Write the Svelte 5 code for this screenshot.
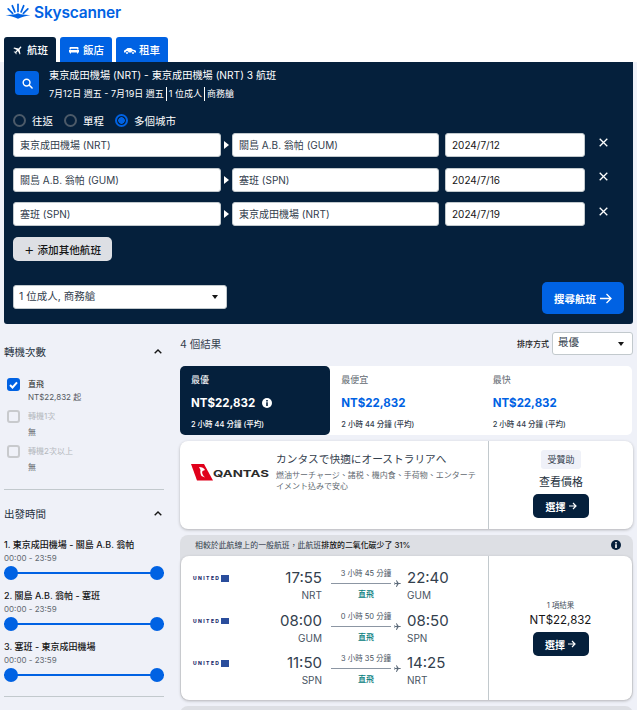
<script lang="ts">
	const tabs = [
		{ label: '航班', icon: 'plane', active: true },
		{ label: '飯店', icon: 'bed', active: false },
		{ label: '租車', icon: 'car', active: false }
	];

	const trips = [
		{ from: '東京成田機場 (NRT)', to: '關島 A.B. 翁帕 (GUM)', date: '2024/7/12' },
		{ from: '關島 A.B. 翁帕 (GUM)', to: '塞班 (SPN)', date: '2024/7/16' },
		{ from: '塞班 (SPN)', to: '東京成田機場 (NRT)', date: '2024/7/19' }
	];

	const stops = [
		{ label: '直飛', sub: 'NT$22,832 起', on: true },
		{ label: '轉機1次', sub: '無', on: false },
		{ label: '轉機2次以上', sub: '無', on: false }
	];

	const times = ['1. 東京成田機場 - 關島 A.B. 翁帕', '2. 關島 A.B. 翁帕 - 塞班', '3. 塞班 - 東京成田機場'];

	const sorts = [
		{ label: '最優', price: 'NT$22,832', active: true },
		{ label: '最便宜', price: 'NT$22,832', active: false },
		{ label: '最快', price: 'NT$22,832', active: false }
	];

	const legs = [
		{ dep: '17:55', from: 'NRT', dur: '3 小時 45 分鐘', arr: '22:40', to: 'GUM' },
		{ dep: '08:00', from: 'GUM', dur: '0 小時 50 分鐘', arr: '08:50', to: 'SPN' },
		{ dep: '11:50', from: 'SPN', dur: '3 小時 35 分鐘', arr: '14:25', to: 'NRT' }
	];

	const planePath =
		'M21 12c0-.8-.7-1.4-1.5-1.4H15L10 3H8l2.4 7.6H6L4.4 8.6H3l1 3.4-1 3.4h1.4L6 13.4h4.4L8 21h2l5-7.6h4.5c.8 0 1.500-.6 1.500-1.400z';
</script>

<div class="page">
	<header class="logo">
		<svg width="28" height="17" viewBox="0 0 30 19" fill="none" stroke="#0062e3" stroke-linecap="round">
			<g stroke-width="1.9">
				<path d="M15 9.5V1.500" />
				<path d="M11.500 10L8.600 3" />
				<path d="M18.500 10l2.900-7" />
				<path d="M9 11.500L4 6.500" />
				<path d="M21 11.500l5-5" />
			</g>
			<path d="M1 13.300c5 0 9.500.2 14-1.800 4.500 2 9 1.800 14 1.800-5 1.400-9.500 1.700-14 4.200-4.500-2.500-9-2.800-14-4.200z" fill="#0062e3" stroke="none" />
		</svg>
		<span>Skyscanner</span>
	</header>

	<nav class="tabs">
		{#each tabs as tab}
			<div class="tab" class:active={tab.active}>
				<svg width="12" height="12" viewBox="0 0 24 24" fill="#fff">
					{#if tab.icon === 'plane'}
						<path d={planePath} transform="rotate(-45 12 12)" />
					{:else if tab.icon === 'bed'}
						<path d="M5 6h14a2 2 0 0 1 2 2v3h-3V9.500H6V11H3V8a2 2 0 0 1 2-2zM2 12h20v5h-2v2h-2v-2H6v2H4v-2H2z" />
					{:else}
						<path d="M7 8h7l4 3.500 3 .5c1.500.3 3 1 3 2.500V17h-3a3 3 0 0 0-6 0H9a3 3 0 0 0-6 0H0v-2.500c0-1.500 1-2.500 3-2.800zM6 20a2 2 0 1 1 0-4 2 2 0 0 1 0 4zm12 0a2 2 0 1 1 0-4 2 2 0 0 1 0 4z" />
					{/if}
				</svg>
				<span>{tab.label}</span>
			</div>
		{/each}
	</nav>

	<section class="panel">
		<div class="summary">
			<div class="search-icon">
				<svg width="11" height="11" viewBox="0 0 12 12" fill="none" stroke="#fff" stroke-width="1.600" stroke-linecap="round">
					<circle cx="5" cy="5" r="3.700" />
					<path d="M8 8l3 3" />
				</svg>
			</div>
			<div class="summary-text">
				<div class="route">東京成田機場 (NRT) - 東京成田機場 (NRT) 3 航班</div>
				<div class="dates">
					<span>7月12日 週五 - 7月19日 週五</span><span class="sep">1 位成人</span><span class="sep">商務艙</span>
				</div>
			</div>
		</div>

		<div class="radios">
			<span class="radio"><i></i>往返</span>
			<span class="radio"><i></i>單程</span>
			<span class="radio on"><i></i>多個城市</span>
		</div>

		<div class="trips">
			{#each trips as trip}
				<div class="trip">
					<div class="field place">{trip.from}</div>
					<svg class="swap" width="5" height="8" viewBox="0 0 5 8"><path d="M0 0l5 4-5 4z" fill="#fff" /></svg>
					<div class="field place">{trip.to}</div>
					<div class="field date">{trip.date}</div>
					<svg class="remove" width="9" height="9" viewBox="0 0 9 9" stroke="#fff" stroke-width="1.300"><path d="M.7.7l7.600 7.600M8.300.7L.7 8.300" /></svg>
				</div>
			{/each}
		</div>

		<button class="add"><span class="plus">+</span>添加其他航班</button>

		<div class="panel-foot">
			<div class="field cabin">1 位成人, 商務艙<b class="caret"></b></div>
			<button class="search">
				搜尋航班
				<svg width="12" height="11" viewBox="0 0 12 11" fill="none" stroke="#fff" stroke-width="1.300"><path d="M0 5.500h11M6.500 1l4.500 4.500L6.500 10" /></svg>
			</button>
		</div>
	</section>

	<div class="content">
		<aside class="filters">
			<div class="filter-head">
				<h3>轉機次數</h3>
				<svg class="chev" width="8" height="5" viewBox="0 0 8 5" fill="none" stroke="#161616" stroke-width="1.400"><path d="M.7 4.300L4 1l3.300 3.300" /></svg>
			</div>
			<div class="stops">
				{#each stops as stop}
					<div class="stop" class:off={!stop.on}>
						<span class="check">
							{#if stop.on}
								<svg width="9" height="8" viewBox="0 0 9 8" fill="none" stroke="#fff" stroke-width="2"><path d="M1 4l2.500 2.500L8 1.300" /></svg>
							{/if}
						</span>
						<div>
							<div class="stop-label">{stop.label}</div>
							<div class="stop-sub">{stop.sub}</div>
						</div>
					</div>
				{/each}
			</div>
			<hr />
			<div class="filter-head second">
				<h3>出發時間</h3>
				<svg class="chev" width="8" height="5" viewBox="0 0 8 5" fill="none" stroke="#161616" stroke-width="1.400"><path d="M.7 4.300L4 1l3.300 3.300" /></svg>
			</div>
			<div class="times">
				{#each times as time}
					<div class="time">
						<div class="time-label">{time}</div>
						<div class="time-range">00:00 - 23:59</div>
						<div class="slider"><i></i><i></i></div>
					</div>
				{/each}
			</div>
			<hr />
		</aside>

		<main class="results">
			<div class="results-head">
				<span class="count">4 個結果</span>
				<span class="sort-label">排序方式</span>
				<div class="sort-select">最優<b class="caret"></b></div>
			</div>

			<div class="sorts">
				{#each sorts as sort}
					<div class="sort" class:active={sort.active}>
						<div class="sort-name">{sort.label}</div>
						<div class="sort-price">
							{sort.price}
							{#if sort.active}
								<svg width="10" height="10" viewBox="0 0 10 10"><circle cx="5" cy="5" r="5" fill="#fff" /><path d="M4.200 2h1.600v1.500H4.200zM4.200 4.300h1.600V8H4.200z" fill="#05203c" /></svg>
							{/if}
						</div>
						<div class="sort-time">2 小時 44 分鐘 (平均)</div>
					</div>
				{/each}
			</div>

			<article class="card ad">
				<div class="ad-main">
					<div class="qantas">
						<svg width="22" height="17" viewBox="0 0 22 17">
							<path d="M0 0h13l9 16.500H6z" fill="#e0001b" />
							<path d="M8 3c3 0 5 1 6 3l-2.500 1c-1 2 0 4 2.500 6.500l-3.500-1.500C9.500 10 9 8 9.500 6z" fill="#fff" />
						</svg>
						<span>QANTAS</span>
					</div>
					<div class="ad-copy">
						<div class="ad-title">カンタスで快適にオーストラリアへ</div>
						<div class="ad-text">燃油サーチャージ、諸税、機内食、手荷物、エンターテイメント込みで安心</div>
					</div>
				</div>
				<div class="side">
					<span class="sponsored">受贊助</span>
					<span class="view">查看價格</span>
					<button class="select">選擇 <svg width="8" height="8" viewBox="0 0 8 8" fill="none" stroke="#fff" stroke-width="1.200"><path d="M0 4h7M4 1l3 3-3 3" /></svg></button>
				</div>
			</article>

			<article class="eco">
				<div class="eco-head">
					<span>相較於此航線上的一般航班，此航班<b>排放的二氧化碳少了 31%</b></span>
					<svg width="10" height="10" viewBox="0 0 10 10"><circle cx="5" cy="5" r="5" fill="#05203c" /><path d="M4.200 2h1.600v1.500H4.200zM4.200 4.300h1.600V8H4.200z" fill="#fff" /></svg>
				</div>
				<div class="card flight">
					<div class="legs">
						{#each legs as leg}
							<div class="leg">
								<div class="airline"><span>UNITED</span><i></i></div>
								<div class="stamp dep"><strong>{leg.dep}</strong><span>{leg.from}</span></div>
								<div class="path">
									<div class="dur">{leg.dur}</div>
									<div class="line"></div>
									<div class="direct">直飛</div>
									<svg width="9" height="9" viewBox="0 0 24 24" fill="#5d6b7a"><path d={planePath} /></svg>
								</div>
								<div class="stamp arr"><strong>{leg.arr}</strong><span>{leg.to}</span></div>
							</div>
						{/each}
					</div>
					<div class="side price-side">
						<span class="deals">1 項結果</span>
						<span class="price">NT$22,832</span>
						<button class="select">選擇 <svg width="8" height="8" viewBox="0 0 8 8" fill="none" stroke="#fff" stroke-width="1.200"><path d="M0 4h7M4 1l3 3-3 3" /></svg></button>
					</div>
				</div>
			</article>
			<div class="next-card"></div>
		</main>
	</div>
</div>

<style>
	:global(body) {
		margin: 0;
		background: #eff1f8;
	}

	.page {
		height: 710px;
		overflow: hidden;
		background: #eff1f8;
		font-family: Inter, 'Noto Sans CJK TC', sans-serif;
		color: #161616;
		font-size: 10px;
	}

	.logo {
		height: 37px;
		background: #fff;
		display: flex;
		align-items: flex-start;
		gap: 2px;
		padding: 3px 0 0 4px;
		box-sizing: border-box;
		color: #0062e3;
		font-size: 15.5px;
		font-weight: 600;
		line-height: 18px;
		letter-spacing: -0.2px;
	}

	.logo span {
		margin-top: 1px;
	}

	.tabs {
		display: flex;
		gap: 4px;
		padding-left: 4px;
		background: #fff;
		height: 25px;
	}

	.tab {
		width: 52px;
		height: 25px;
		display: flex;
		align-items: center;
		justify-content: center;
		gap: 3px;
		background: #0062e3;
		color: #fff;
		border-radius: 3px 3px 0 0;
		font-size: 10.5px;
		font-weight: 500;
	}

	.tab.active {
		background: #05203c;
	}

	.panel {
		margin: 0 4px;
		height: 262px;
		box-sizing: border-box;
		background: #05203c;
		border-radius: 0 0 3px 3px;
		padding: 9px 9px 0 9px;
		color: #fff;
	}

	.summary {
		display: flex;
		gap: 10px;
		padding-left: 2px;
	}

	.search-icon {
		width: 24px;
		height: 24px;
		border-radius: 4px;
		background: #0062e3;
		display: flex;
		align-items: center;
		justify-content: center;
		flex: none;
	}

	.summary-text {
		margin-top: -4px;
	}

	.route {
		font-size: 10.2px;
		line-height: 16px;
	}

	.dates {
		margin-top: 4px;
		font-size: 9px;
		line-height: 14px;
		display: flex;
	}

	.sep {
		border-left: 1px solid #fff;
		padding-left: 2px;
		margin-left: 2px;
	}

	.radios {
		display: flex;
		gap: 11px;
		margin-top: 12px;
		font-size: 10.5px;
		height: 14px;
	}

	.radio {
		display: flex;
		align-items: center;
		gap: 6px;
	}

	.radio i {
		width: 9px;
		height: 9px;
		border: 2px solid #4c5a69;
		border-radius: 50%;
	}

	.radio.on i {
		border-color: #0062e3;
		background: radial-gradient(circle, #0062e3 0 3px, transparent 3.5px);
	}

	.trips {
		margin-top: 6px;
		display: grid;
		gap: 10.5px;
	}

	.trip {
		display: flex;
		align-items: center;
		height: 24px;
	}

	.field {
		height: 24px;
		box-sizing: border-box;
		background: #fff;
		border: 1px solid #c2c9cd;
		border-radius: 3px;
		font-size: 10px;
		line-height: 22px;
		padding-left: 6px;
		color: #33404d;
	}

	.place {
		width: 208px;
	}

	.place:nth-of-type(2) {
		width: 207px;
	}

	.swap {
		width: 11px;
		flex: none;
	}

	.date {
		width: 140px;
		margin-left: 6px;
		color: #161616;
	}

	.remove {
		margin: -6px 0 0 14px;
	}

	.add {
		display: flex;
		align-items: center;
		margin-top: 11px;
		width: 99px;
		height: 24px;
		padding: 0 0 0 11px;
		border: 0;
		border-radius: 5px;
		background: #dddfe4;
		font: inherit;
		font-size: 10.6px;
		font-weight: 500;
		color: #161616;
		white-space: nowrap;
	}

	.plus {
		font-size: 16px;
		font-weight: 300;
		margin-right: 3px;
		line-height: 20px;
	}

	.panel-foot {
		display: flex;
		justify-content: space-between;
		align-items: flex-start;
		margin-top: 21px;
	}

	.cabin {
		width: 214px;
		margin-top: 3px;
		padding-left: 5px;
		position: relative;
		font-size: 10.5px;
	}

	.caret {
		position: absolute;
		right: 8px;
		top: 9px;
		border: 3px solid transparent;
		border-top: 4px solid #161616;
		border-bottom: 0;
	}

	.search {
		width: 82px;
		height: 32px;
		border: 0;
		border-radius: 5px;
		background: #0062e3;
		color: #fff;
		font: inherit;
		font-size: 10.5px;
		font-weight: 700;
		display: flex;
		align-items: center;
		justify-content: center;
		gap: 4px;
	}

	.content {
		display: flex;
		padding: 8px 4px 0;
		gap: 16px;
	}

	.filters {
		width: 160px;
		flex: none;
	}

	.filter-head {
		display: flex;
		justify-content: space-between;
		align-items: center;
		height: 24px;
		margin-top: 7px;
		padding-right: 2px;
	}

	.filter-head.second {
		margin-top: 11px;
	}

	h3 {
		margin: 0;
		font-size: 10.5px;
		font-weight: 400;
		color: #26323e;
	}

	.stops {
		margin-top: 15px;
	}

	.stop {
		display: flex;
		gap: 8px;
		padding-left: 3px;
		height: 35px;
		color: #161616;
	}

	.stop:first-child {
		height: 32px;
	}

	.check {
		width: 13px;
		height: 13px;
		box-sizing: border-box;
		border-radius: 3px;
		background: #0062e3;
		display: flex;
		align-items: center;
		justify-content: center;
		flex: none;
	}

	.stop.off .check {
		background: none;
		border: 2px solid #c8cacd;
	}

	.stop-label {
		font-size: 8px;
		line-height: 13px;
	}

	.stop-sub {
		font-size: 8px;
		line-height: 13px;
		color: #545860;
	}

	.stop.off .stop-label {
		color: #b4b8bd;
	}

	.stop.off .stop-sub {
		margin-top: 3px;
	}

	hr {
		margin: 9px 0 0;
		border: 0;
		border-top: 1px solid #c2c9cd;
	}

	.times {
		margin-top: 13px;
	}

	.times + hr {
		margin-top: 5px;
	}

	.time {
		height: 51px;
	}

	.time-label {
		font-size: 9px;
		line-height: 13px;
		font-weight: 500;
	}

	.time-range {
		font-size: 8px;
		line-height: 11px;
		margin-top: 2px;
		color: #626971;
	}

	.slider {
		position: relative;
		height: 2px;
		margin-top: 8px;
		background: #0062e3;
	}

	.slider i {
		position: absolute;
		top: -6px;
		left: 0;
		width: 14px;
		height: 14px;
		border-radius: 50%;
		background: #0062e3;
	}

	.slider i + i {
		left: auto;
		right: 0;
	}

	.results {
		width: 453px;
		flex: none;
	}

	.results-head {
		display: flex;
		align-items: center;
		height: 23px;
	}

	.count {
		font-size: 10.5px;
		color: #33404d;
		margin-right: auto;
	}

	.sort-label {
		font-size: 8px;
		margin-right: 3px;
		font-weight: 500;
	}

	.sort-select {
		position: relative;
		width: 81px;
		height: 23px;
		box-sizing: border-box;
		background: #fff;
		border: 1px solid #c2c9cd;
		border-radius: 3px;
		padding-left: 5px;
		line-height: 19px;
		font-size: 10.5px;
		color: #33404d;
	}

	.sorts {
		display: flex;
		margin-top: 11px;
		width: 452px;
		height: 69px;
		background: #fff;
		border-radius: 5px;
	}

	.sort {
		flex: 1;
		padding: 7px 0 0 11px;
		color: #626971;
		border-radius: 5px;
		font-size: 9px;
	}

	.sort:last-child {
		padding-left: 12px;
	}

	.sort.active {
		background: #05203c;
		color: #fff;
	}

	.sort-name {
		line-height: 13px;
	}

	.sort-price {
		display: flex;
		align-items: center;
		gap: 7px;
		margin-top: 8px;
		font-size: 11.5px;
		font-weight: 700;
		color: #0062e3;
		line-height: 18px;
	}

	.sort.active .sort-price {
		color: #fff;
	}

	.sort-time {
		margin-top: 7px;
		font-size: 7.5px;
		font-weight: 500;
		line-height: 12px;
		color: #33404d;
	}

	.sort.active .sort-time {
		color: #fff;
	}

	.card {
		display: flex;
		background: #fff;
		border-radius: 8px;
		box-shadow: 0 1px 3px rgba(37, 32, 31, 0.3);
	}

	.ad {
		height: 88px;
		margin-top: 6px;
	}

	.ad-main {
		display: flex;
		width: 308px;
		box-sizing: border-box;
		padding: 11px 0 0 11px;
	}

	.qantas {
		display: flex;
		align-items: flex-end;
		height: 27px;
		width: 85px;
		flex: none;
		padding-top: 2px;
	}

	.qantas span {
		font-size: 9.5px;
		font-weight: 700;
		transform: scaleX(1.4);
		transform-origin: left;
		line-height: 13px;
		color: #2b2b2b;
		padding-bottom: 1px;
	}

	.ad-copy {
		width: 204px;
	}

	.ad-title {
		font-size: 10.7px;
		line-height: 16px;
		color: #33404d;
	}

	.ad-text {
		margin-top: 2px;
		font-size: 8px;
		line-height: 11px;
		color: #626971;
		width: 202px;
	}

	.side {
		flex: 1;
		border-left: 1px solid #c2c9cd;
		display: flex;
		flex-direction: column;
		align-items: center;
		padding-top: 9px;
	}

	.sponsored {
		background: #eff1f8;
		border-radius: 3px;
		padding: 0 6px;
		height: 19px;
		line-height: 19px;
		font-size: 9px;
		color: #33404d;
	}

	.view {
		margin-top: 5px;
		font-size: 11px;
		line-height: 16px;
		color: #26323e;
	}

	.select {
		margin-top: 4px;
		width: 56px;
		height: 24px;
		border: 0;
		border-radius: 5px;
		background: #05203c;
		color: #fff;
		font: inherit;
		font-size: 10px;
		font-weight: 700;
		display: flex;
		align-items: center;
		justify-content: center;
		gap: 3px;
		padding: 0;
	}

	.eco {
		margin-top: 6px;
		background: #dddfe4;
		border-radius: 8px;
		padding: 0 1px;
		height: 165px;
	}

	.eco-head {
		height: 21px;
		box-sizing: border-box;
		display: flex;
		justify-content: space-between;
		align-items: center;
		padding: 0 11px 2px 14px;
		font-size: 7.9px;
		color: #33404d;
	}

	.eco-head b {
		font-weight: 500;
		color: #161616;
	}

	.flight {
		height: 144px;
	}

	.legs {
		width: 307px;
		flex: none;
		padding-top: 10px;
		box-sizing: border-box;
	}

	.leg {
		display: flex;
		height: 42.5px;
	}

	.airline {
		display: flex;
		align-items: flex-start;
		width: 81px;
		padding-left: 12px;
		box-sizing: border-box;
		gap: 2px;
		font-size: 5px;
		font-weight: 800;
		letter-spacing: 1.4px;
		line-height: 7px;
		padding-top: 9px;
		color: #1b2d6c;
	}

	.airline i {
		width: 8px;
		height: 6.5px;
		background: #2a4d9c;
		margin-left: -1px;
		flex: none;
	}

	.stamp {
		display: flex;
		flex-direction: column;
	}

	.stamp strong {
		font-size: 15px;
		font-weight: 400;
		line-height: 20px;
		color: #33404d;
	}

	.stamp span {
		font-size: 10px;
		line-height: 14px;
		color: #4a5563;
	}

	.dep {
		width: 60px;
		text-align: right;
		padding-top: 2px;
	}

	.arr {
		margin-left: 6px;
		padding-top: 2px;
	}

	.path {
		position: relative;
		width: 70px;
		margin-left: 9px;
		text-align: center;
		color: #4a5563;
		padding-top: 2px;
	}

	.dur {
		font-size: 7.5px;
		line-height: 11px;
		white-space: nowrap;
	}

	.line {
		width: 60px;
		height: 1px;
		background: #8c96a3;
		margin-top: 4px;
	}

	.direct {
		margin-top: 5px;
		font-size: 8px;
		line-height: 11px;
		color: #007a7a;
		font-weight: 500;
	}

	.path svg {
		position: absolute;
		left: 62px;
		top: 13px;
	}

	.price-side {
		padding-top: 44px;
	}

	.deals {
		font-size: 7.5px;
		line-height: 11px;
		color: #4a5563;
	}

	.price {
		font-size: 11.5px;
		line-height: 16px;
		margin-top: 1px;
		color: #161616;
	}

	.next-card {
		height: 30px;
		margin-top: 6px;
		background: #dddfe4;
		border-radius: 8px 8px 0 0;
	}
</style>
